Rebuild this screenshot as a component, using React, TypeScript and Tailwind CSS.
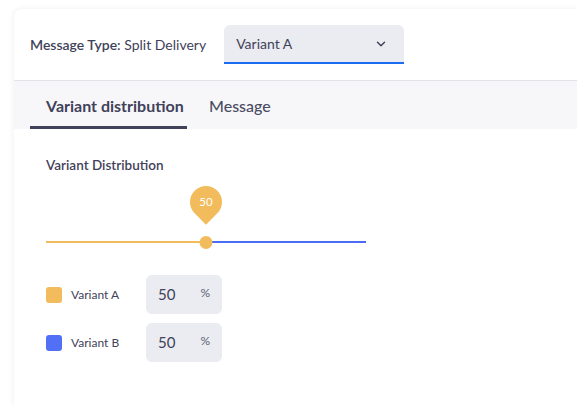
import { ChevronDown } from 'lucide-react';

const variants = [
  { name: 'Variant A', value: 50, color: 'bg-[#f2bb5b]' },
  { name: 'Variant B', value: 50, color: 'bg-[#5270f6]' },
];

function SplitSlider({ value }: { value: number }) {
  return (
    <div className="relative w-[320px] h-[62px]">
      <div
        className="absolute top-0 -translate-x-1/2 w-[32px] h-[32px]"
        style={{ left: `${value}%` }}
      >
        <div className="w-[32px] h-[32px] rounded-[50%_50%_0_50%] rotate-45 bg-[#f2bb5b] flex items-center justify-center">
          <span className="-rotate-45 text-[11.5px] text-white">{value}</span>
        </div>
      </div>
      <div className="absolute left-0 right-0 top-[55px] h-[2px] flex">
        <div className="h-full bg-[#f2bb5b]" style={{ width: `${value}%` }} />
        <div className="h-full flex-1 bg-[#4d6cf5]" />
      </div>
      <div
        className="absolute top-[49.5px] -translate-x-1/2 w-[13px] h-[13px] rounded-full bg-[#f2bb5b]"
        style={{ left: `${value}%` }}
      />
    </div>
  );
}

export default function App() {
  return (
    <div
      className="min-h-screen bg-white pl-[14px] pt-[9px] text-[#3f4259]"
      style={{ fontFamily: 'Lato, "Liberation Sans", sans-serif' }}
    >
      <div className="min-h-[397px] rounded-tl-lg bg-white shadow-[0_0_6px_rgba(0,0,0,0.07)]">
        <div className="flex h-[72px] items-center border-b border-[#e2e3e8] pl-4">
          <p className="text-[14px]">
            <span className="font-semibold">Message Type:</span> Split Delivery
          </p>
          <button className="ml-[18px] flex h-[39px] w-[180px] items-center justify-between rounded-t-md border-b-2 border-[#1c6cf2] bg-[#ebecf1] pl-3 pr-4 text-[14px]">
            <span>Variant A</span>
            <ChevronDown size={14} strokeWidth={2.5} />
          </button>
        </div>

        <div className="flex h-[48px] bg-[#f7f7fa] pl-4">
          <div className="flex w-[157px] items-center border-b-[3px] border-[#3f4259] pl-4 pt-[4px] text-[16px] font-bold">
            Variant distribution
          </div>
          <div className="flex items-center pl-[22px] pt-[1px] text-[16px] font-medium text-[#4a4d63]">
            Message
          </div>
        </div>

        <div className="pl-8 pt-[27px]">
          <h3 className="text-[13.5px] font-semibold leading-[18px]">Variant Distribution</h3>
          <div className="mt-[12px]">
            <SplitSlider value={50} />
          </div>
          <div className="mt-[27px] flex flex-col gap-[9px]">
            {variants.map((v) => (
              <div key={v.name} className="flex items-center">
                <span className={`h-4 w-4 rounded-[3px] ${v.color}`} />
                <span className="ml-[9px] w-[75px] text-[12px]">{v.name}</span>
                <div className="flex h-[39px] w-[76px] rounded-md bg-[#ebecf1] pl-3 pr-3">
                  <span className="self-center text-[15px]">{v.value}</span>
                  <span className="ml-auto pt-[9px] text-[12px] text-[#5a5d72]">%</span>
                </div>
              </div>
            ))}
          </div>
        </div>
      </div>
    </div>
  );
}
